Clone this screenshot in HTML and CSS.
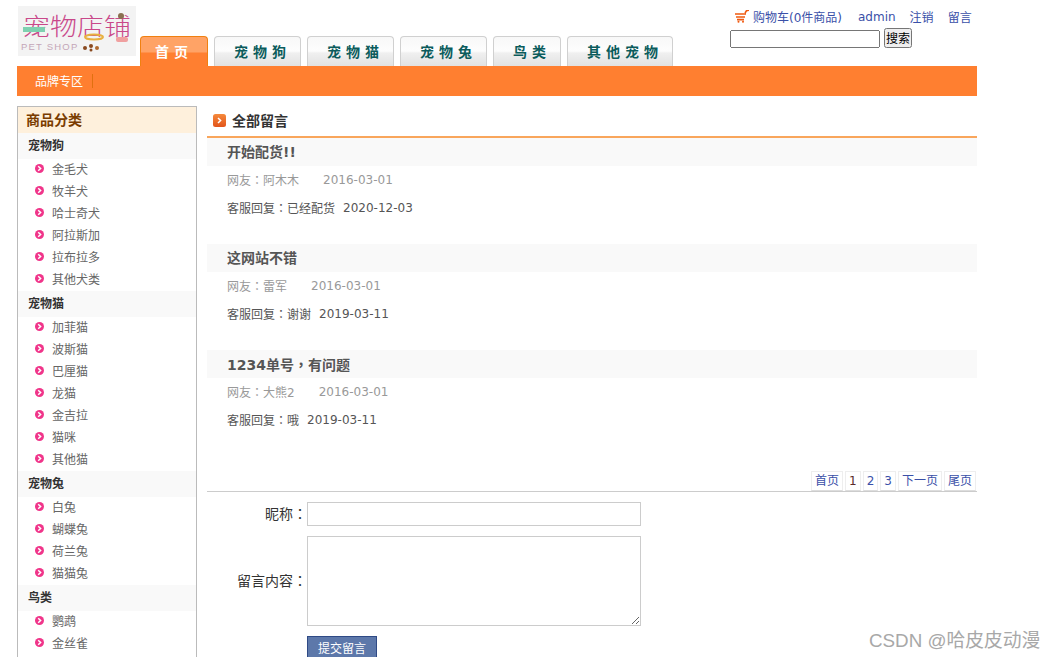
FILE: index.html
```html
<!DOCTYPE html>
<html>
<head>
    <meta charset="UTF-8">
    <link rel="stylesheet" href="styles.css">
</head>
<body>
    <svg class="defs" width="0" height="0">
        <symbol id="bullet" viewBox="0 0 9 9">
            <circle cx="4.5" cy="4.5" r="4.5" fill="#f0358a"/>
            <path d="M3.2 2.3 L5.6 4.5 L3.2 6.7" fill="none" stroke="#fff" stroke-width="1.5"/>
        </symbol>
    </svg>

    <div class="wrap">
        <div class="header">
            <svg class="logo" width="118" height="50" viewBox="0 0 118 50">
                <rect width="118" height="50" fill="#f3f3f3"/>
                <text class="logo-cn" x="5" y="29" textLength="108" lengthAdjust="spacingAndGlyphs">宠物店铺</text>
                <text class="logo-en" x="3" y="44">PET SHOP</text>
                <rect x="5" y="21" width="22" height="5" fill="#7fd0b0"/>
                <ellipse cx="76" cy="31" rx="9" ry="2.5" fill="none" stroke="#e8b040" stroke-width="2"/>
                <circle cx="103" cy="10" r="3" fill="#8a7050"/>
                <rect x="98" y="31" width="12" height="5" rx="2" fill="#f0a0a0"/>
                <circle cx="67" cy="42" r="2" fill="#8a4a20"/>
                <circle cx="73" cy="40" r="2" fill="#8a4a20"/>
                <circle cx="73" cy="44" r="1.5" fill="#8a4a20"/>
                <circle cx="79" cy="42" r="2" fill="#b06a30"/>
            </svg>
            <div class="tabs">
                <a class="tab active">首页</a>
                <a class="tab">宠物狗</a>
                <a class="tab">宠物猫</a>
                <a class="tab">宠物兔</a>
                <a class="tab">鸟类</a>
                <a class="tab">其他宠物</a>
            </div>
            <div class="top-right">
                <div class="top-links">
                    <svg class="cart" width="14" height="13" viewBox="0 0 14 13">
                        <path d="M10 3 L11.5 .8 L14 .2 M0 4 H11 M1 7 H10 M2 9.6 H9" fill="none" stroke="#f0590f" stroke-width="1.6"/>
                        <circle cx="3.5" cy="11.7" r="1" fill="#f0590f"/>
                        <circle cx="8" cy="11.7" r="1" fill="#f0590f"/>
                    </svg>
                    <a class="cart-link">购物车(0件商品)</a>
                    <a>admin</a>
                    <a>注销</a>
                    <a>留言</a>
                </div>
                <div class="search">
                    <input type="text">
                    <button>搜索</button>
                </div>
            </div>
        </div>

        <div class="sub-nav">
            <a>品牌专区</a>
        </div>

        <div class="content">
            <div class="sidebar">
                <div class="side-title">商品分类</div>

                <div class="cat">宠物狗</div>
                <div class="item"><svg><use href="#bullet"/></svg>金毛犬</div>
                <div class="item"><svg><use href="#bullet"/></svg>牧羊犬</div>
                <div class="item"><svg><use href="#bullet"/></svg>哈士奇犬</div>
                <div class="item"><svg><use href="#bullet"/></svg>阿拉斯加</div>
                <div class="item"><svg><use href="#bullet"/></svg>拉布拉多</div>
                <div class="item"><svg><use href="#bullet"/></svg>其他犬类</div>

                <div class="cat">宠物猫</div>
                <div class="item"><svg><use href="#bullet"/></svg>加菲猫</div>
                <div class="item"><svg><use href="#bullet"/></svg>波斯猫</div>
                <div class="item"><svg><use href="#bullet"/></svg>巴厘猫</div>
                <div class="item"><svg><use href="#bullet"/></svg>龙猫</div>
                <div class="item"><svg><use href="#bullet"/></svg>金吉拉</div>
                <div class="item"><svg><use href="#bullet"/></svg>猫咪</div>
                <div class="item"><svg><use href="#bullet"/></svg>其他猫</div>

                <div class="cat">宠物兔</div>
                <div class="item"><svg><use href="#bullet"/></svg>白兔</div>
                <div class="item"><svg><use href="#bullet"/></svg>蝴蝶兔</div>
                <div class="item"><svg><use href="#bullet"/></svg>荷兰兔</div>
                <div class="item"><svg><use href="#bullet"/></svg>猫猫兔</div>

                <div class="cat">鸟类</div>
                <div class="item"><svg><use href="#bullet"/></svg>鹦鹉</div>
                <div class="item"><svg><use href="#bullet"/></svg>金丝雀</div>
                <div class="item"></div>
            </div>

            <div class="main">
                <div class="main-title">
                    <svg width="13" height="13" viewBox="0 0 13 13">
                        <defs>
                            <linearGradient id="arrowBg" x1="0" y1="0" x2="0" y2="1">
                                <stop offset="0" stop-color="#f58a3c"/>
                                <stop offset="1" stop-color="#e2541a"/>
                            </linearGradient>
                        </defs>
                        <rect width="13" height="13" rx="2.5" fill="url(#arrowBg)"/>
                        <path d="M5 4 L7.6 6.5 L5 9" fill="none" stroke="#fff" stroke-width="1.5"/>
                    </svg>
                    全部留言
                </div>

                <div class="msg">
                    <div class="msg-title">开始配货!!</div>
                    <div class="msg-info"><span>网友<i class="punct">：</i>阿木木</span><span>2016-03-01</span></div>
                    <div class="msg-reply"><span>客服回复<i class="punct">：</i>已经配货</span><span>2020-12-03</span></div>
                </div>
                <div class="msg">
                    <div class="msg-title">这网站不错</div>
                    <div class="msg-info"><span>网友<i class="punct">：</i>雷军</span><span>2016-03-01</span></div>
                    <div class="msg-reply"><span>客服回复<i class="punct">：</i>谢谢</span><span>2019-03-11</span></div>
                </div>
                <div class="msg">
                    <div class="msg-title">1234单号<i class="punct">，</i>有问题</div>
                    <div class="msg-info"><span>网友<i class="punct">：</i>大熊2</span><span>2016-03-01</span></div>
                    <div class="msg-reply"><span>客服回复<i class="punct">：</i>哦</span><span>2019-03-11</span></div>
                </div>

                <div class="pager">
                    <a>首页</a>
                    <a class="current">1</a>
                    <a>2</a>
                    <a>3</a>
                    <a>下一页</a>
                    <a>尾页</a>
                </div>

                <div class="form">
                    <label>昵称<i class="punct">：</i></label>
                    <input type="text">
                    <label>留言内容<i class="punct">：</i></label>
                    <textarea></textarea>
                    <button class="submit">提交留言</button>
                </div>
            </div>
        </div>
    </div>

    <div class="watermark">CSDN @哈皮皮动漫</div>
</body>
</html>
```

FILE: styles.css
```css
html, body {
    height: 657px;
    overflow: hidden;
}
body {
    margin: 0;
    background: #fff;
    font-family: "DejaVu Sans", "Noto Sans CJK SC", sans-serif;
    font-size: 12px;
    color: #555;
}
.defs {
    position: absolute;
}
.punct {
    font-family: "Noto Sans CJK TC", sans-serif;
    font-style: normal;
}
.wrap {
    width: 960px;
    margin-left: 17px;
}

/* header */
.header {
    display: flex;
    height: 66px;
}
.logo {
    margin: 6px 4px 0 1px;
    flex: none;
}
.logo-cn {
    font-family: "Noto Sans CJK SC", sans-serif;
    font-size: 24px;
    font-weight: 300;
    fill: #c9488a;
}
.logo-en {
    font-family: "Liberation Sans", sans-serif;
    font-size: 9.5px;
    letter-spacing: 1.2px;
    fill: #c4a6b8;
}
.tabs {
    display: flex;
    gap: 6px;
    align-items: flex-end;
}
.tab {
    height: 30px;
    box-sizing: border-box;
    padding: 0 9px 0 19px;
    border: 1px solid #d0d0d0;
    border-bottom: none;
    border-radius: 4px 4px 0 0;
    background: linear-gradient(#f8f8f8 0, #fdfdfd 14px, #f0f0f0 16px, #e2e2e2 100%);
    font-family: "Noto Sans CJK SC", sans-serif;
    font-size: 14px;
    font-weight: bold;
    line-height: 29px;
    letter-spacing: 5px;
    color: #0b5c5c;
    white-space: nowrap;
}
.tab.active {
    padding: 0 14px;
    border-color: #f08010;
    background: linear-gradient(#ffa366 0, #ffa366 15px, #ff7f30 16px);
    color: #fff;
}
.top-right {
    margin-left: auto;
    width: 247px;
    padding-top: 9px;
}
.top-links {
    display: flex;
    align-items: center;
    height: 15px;
    padding-left: 5px;
    color: #3a50a8;
    white-space: nowrap;
}
.cart {
    flex: none;
    margin-right: 4px;
}
.top-links a {
    margin-right: 14px;
}
.top-links .cart-link {
    margin-right: 16px;
}
.search {
    display: flex;
    align-items: flex-end;
    gap: 4px;
    margin-top: 4px;
}
.search input {
    width: 150px;
    height: 18px;
    box-sizing: border-box;
    padding: 0 2px;
}
.search button {
    width: 28px;
    height: 20px;
    padding: 0;
    font-family: "Noto Sans CJK SC", sans-serif;
    font-size: 12px;
    line-height: 16px;
    white-space: nowrap;
}

/* orange bar */
.sub-nav {
    display: flex;
    align-items: center;
    height: 30px;
    background: #ff7f30;
    padding-left: 18px;
}
.sub-nav a {
    font-family: "Noto Sans CJK SC", sans-serif;
    color: #fff;
    padding-right: 9px;
    line-height: 14px;
    border-right: 1px solid #e07010;
}

/* two columns */
.content {
    display: flex;
    gap: 10px;
    margin-top: 10px;
    align-items: flex-start;
}
.sidebar {
    width: 180px;
    box-sizing: border-box;
    flex: none;
    border: 1px solid #bbb;
    font-family: "Noto Sans CJK SC", sans-serif;
}
.side-title {
    height: 26px;
    padding-left: 8px;
    background: #fef0dc;
    font-size: 14px;
    font-weight: bold;
    line-height: 24px;
    color: #7a3c00;
}
.cat {
    height: 26px;
    padding-left: 10px;
    background: #f9f9f9;
    font-weight: bold;
    line-height: 24px;
    color: #333;
}
.item {
    display: flex;
    align-items: center;
    height: 22px;
    box-sizing: border-box;
    padding: 0 0 3px 17px;
    color: #666;
}
.item svg {
    width: 9px;
    height: 9px;
    margin: -1px 8px 0 0;
}

/* main column */
.main {
    flex: 1;
}
.main-title {
    display: flex;
    align-items: center;
    gap: 6px;
    height: 28px;
    padding: 0 0 2px 6px;
    border-bottom: 2px solid #f9a65c;
    font-family: "Noto Sans CJK SC", sans-serif;
    font-size: 14px;
    font-weight: bold;
    color: #333;
}
.msg {
    height: 106px;
}
.msg-title {
    height: 28px;
    padding-left: 20px;
    background: #f9f9f9;
    font-size: 14px;
    font-weight: bold;
    line-height: 28px;
    color: #555;
}
.msg-info, .msg-reply {
    display: flex;
    height: 28px;
    padding-left: 20px;
    line-height: 28px;
}
.msg-info {
    gap: 24px;
    color: #999;
}
.msg-reply {
    gap: 8px;
    color: #555;
}
.pager {
    display: flex;
    justify-content: flex-end;
    gap: 2px;
    height: 20px;
    margin-top: 15px;
    padding-right: 1px;
    border-bottom: 1px solid #ccc;
}
.pager a {
    padding: 0 3px;
    border: 1px solid #eee;
    border-bottom-color: #ddd;
    line-height: 18px;
    color: #3a50a8;
}
.pager a.current {
    color: #5a2a2a;
}
.form {
    display: grid;
    grid-template-columns: 100px 334px;
    gap: 10px 0;
    align-items: center;
    margin-top: 10px;
}
.form label {
    padding-bottom: 2px;
    text-align: right;
    font-family: "Noto Sans CJK SC", sans-serif;
    font-size: 14px;
    color: #333;
}
.form input, .form textarea {
    box-sizing: border-box;
    width: 334px;
    margin: 0;
    border: 1px solid #ccc;
    background: #fff;
}
.form input {
    height: 24px;
}
.form textarea {
    height: 90px;
}
.submit {
    grid-column: 2;
    justify-self: start;
    width: 70px;
    height: 23px;
    padding: 0;
    border: 1px solid #2f4a85;
    background: #5d78aa;
    color: #fff;
    font-family: "Noto Sans CJK SC", sans-serif;
    font-size: 12px;
}

.watermark {
    position: absolute;
    left: 869px;
    top: 625px;
    font-family: "Liberation Sans", "Noto Sans CJK SC", sans-serif;
    font-size: 18.8px;
    color: #a8a8a8;
    white-space: nowrap;
}
```
